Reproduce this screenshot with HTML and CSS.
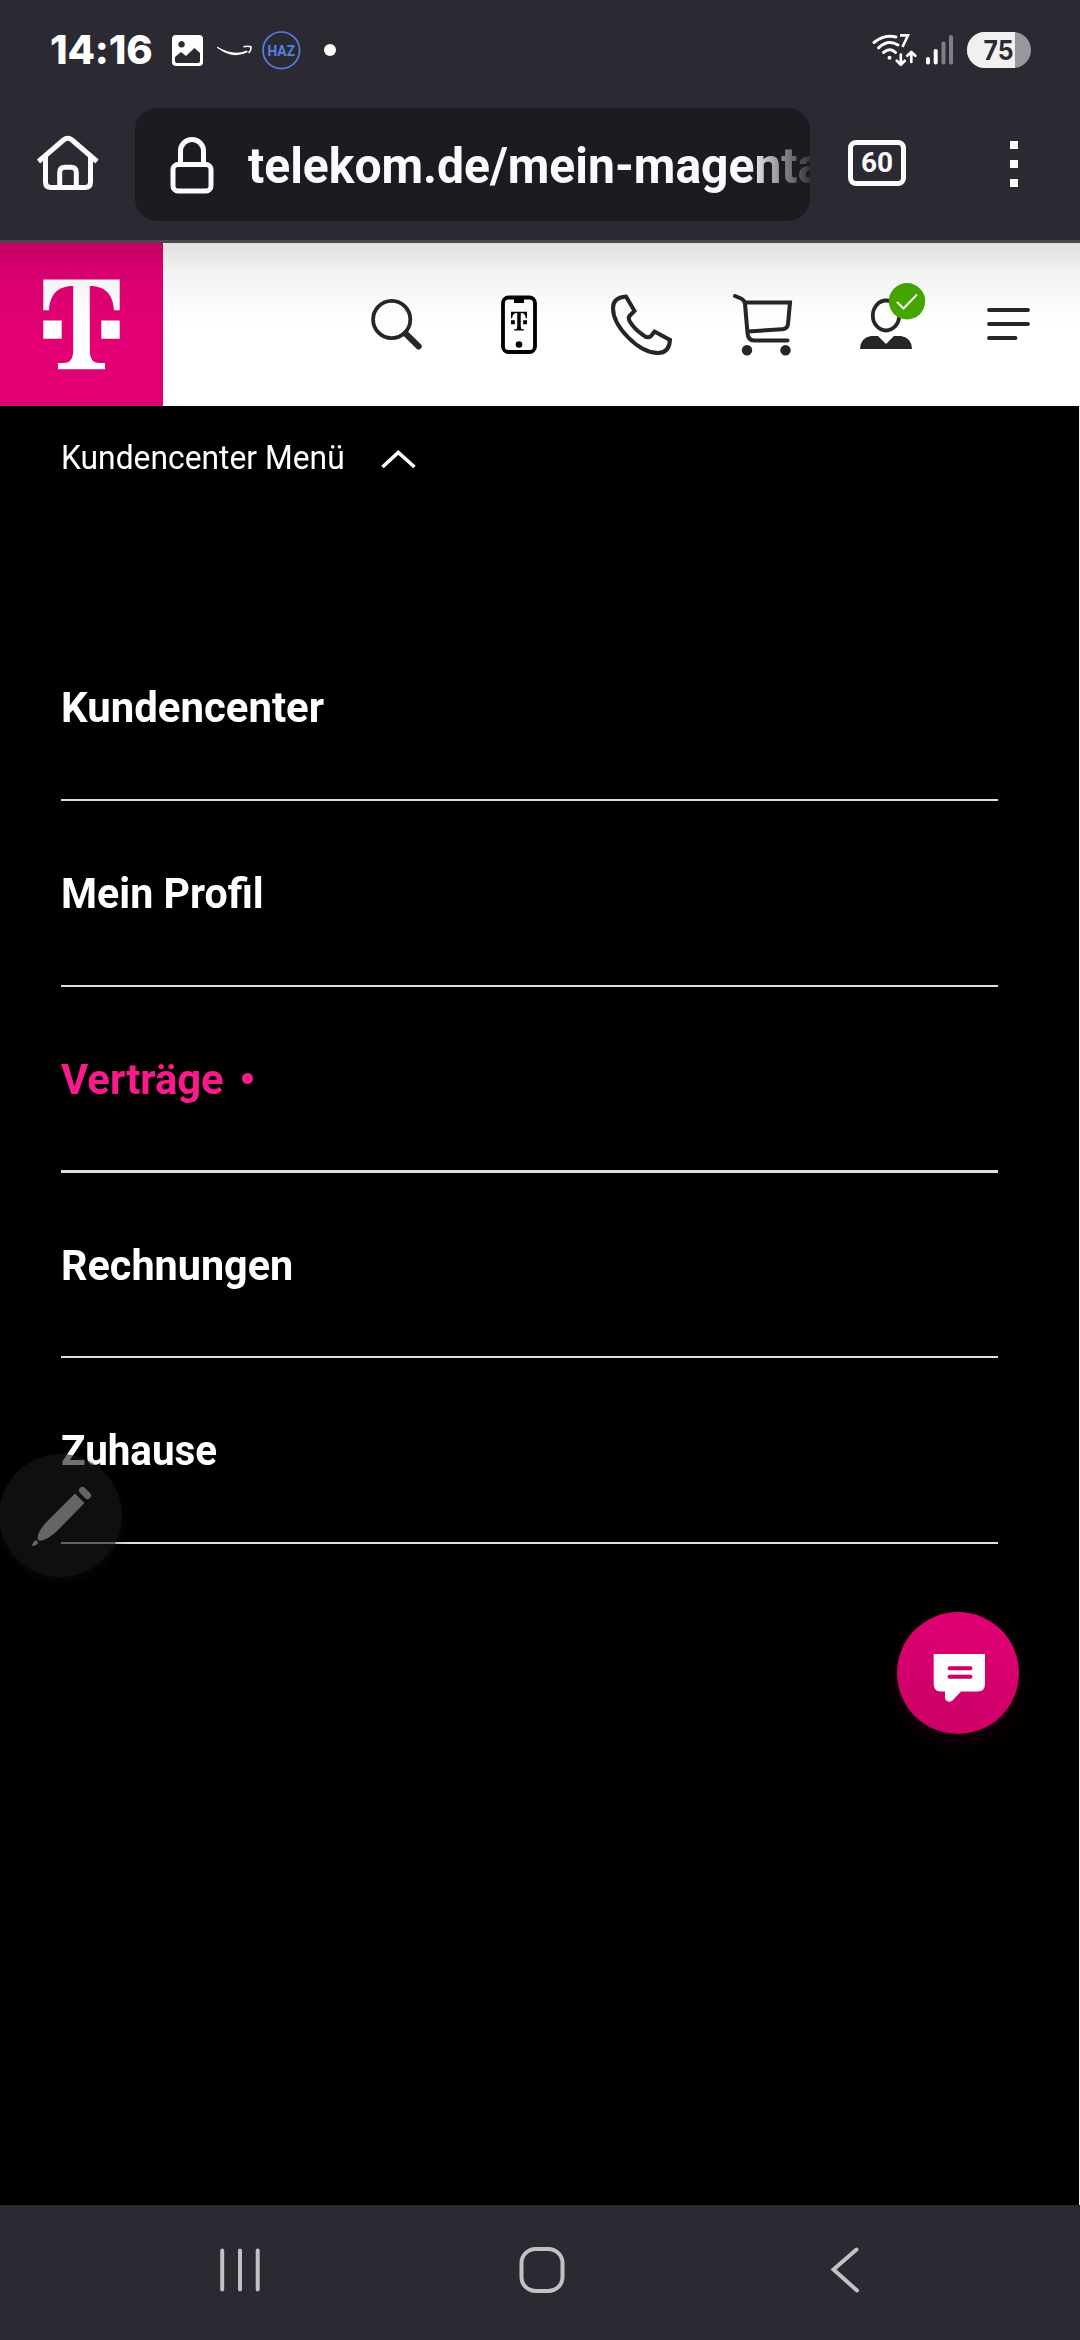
FILE: index.html
```html
<!DOCTYPE html>
<html lang="de">
<head>
<meta charset="utf-8">
<title>Kundencenter</title>
<link rel="stylesheet" href="styles.css">
</head>
<body>
<div class="screen">
  <header class="chrome">
    <div class="status">
      <span class="clock">14:16</span>
      <svg class="status-left" width="166" height="42" viewBox="170 30 166 42">
        <path fill="#fff" fill-rule="evenodd" d="M176 35H199Q203 35 203 39V62Q203 66 199 66H176Q172 66 172 62V39Q172 35 176 35ZM181.500 41A3.300 3.300 0 1 0 181.600 41ZM175 57V61Q175 63 177 63H198Q200 63 200 61V53L194.500 48L186 56L181 52Z"/>
        <path fill="#fff" d="M217 46.500Q234 56.500 246.500 50.500L248 52Q233 60 217 47.800Z"/>
        <path fill="none" stroke="#fff" stroke-width="1.500" d="M243.500 46.800Q248 45.500 251 46.800Q251.500 50 248.500 53"/>
        <circle cx="281.300" cy="50.300" r="18.300" fill="none" stroke="#5680e0" stroke-width="1.700"/>
        <text class="badge-text" x="267.500" y="55.600" textLength="27.500" lengthAdjust="spacingAndGlyphs">HAZ</text>
        <circle cx="330" cy="50" r="6" fill="#fff"/>
      </svg>
      <svg class="status-right" width="162" height="42" viewBox="870 30 162 42">
        <g fill="none" stroke="#fff" stroke-width="3" stroke-linecap="round">
          <path d="M874 42.500Q884 34 896 37"/><path d="M878.500 47.800Q888 39 898 45"/><path d="M883.500 52.500Q890 47 895.500 52.500"/>
          <path stroke-linejoin="round" stroke-width="2.700" d="M900.800 54.500V64.500M896.800 60.800L900.800 64.700L904.800 60.800M911.300 62V52M907.300 55.800L911.300 51.900L915.300 55.800"/>
        </g>
        <circle cx="889.500" cy="57.800" r="2" fill="#fff"/>
        <path fill="none" stroke="#fff" stroke-width="2.600" d="M900 35.400H908L902.500 47"/>
        <g fill="#fff"><rect x="926" y="57" width="4" height="7.500" rx="1.800"/><rect x="933.700" y="49" width="4" height="15.500" rx="1.800"/></g>
        <g fill="#807e86"><rect x="941.500" y="41.500" width="4" height="23" rx="1.800"/><rect x="949" y="35" width="4" height="29.500" rx="1.800"/></g>
        <rect x="967" y="32" width="64" height="36" rx="18" fill="#98979d"/>
        <path fill="#f0f0f1" d="M985 32H1015V68H985A18 18 0 0 1 985 32Z"/>
        <text class="battery-text" x="983.500" y="60" textLength="30" lengthAdjust="spacingAndGlyphs">75</text>
      </svg>
    </div>
    <div class="toolbar">
      <svg class="home" width="64" height="60" viewBox="36 132 64 60" fill="none" stroke="#fbfbfe" stroke-width="5" stroke-linejoin="round">
        <path d="M38.500 161.500L63.500 140Q67.700 136.500 72 140L97 161.500M45.500 156V182Q45.500 187.500 51 187.500H85Q90.500 187.500 90.500 182V156M59.700 187V172.500Q59.700 167.300 65 167.300H71Q76.300 167.300 76.300 172.500V187"/>
      </svg>
      <div class="url">
        <svg class="lock" width="44" height="60" viewBox="170 135 44 60" fill="none" stroke="#fbfbfe" stroke-width="5">
          <rect x="173" y="164.500" width="38" height="26.500" rx="5"/><path d="M180.500 164V151A11.500 11.500 0 0 1 203.500 151V164"/>
        </svg>
        <span class="address">telekom.de/mein-magenta</span>
      </div>
      <div class="tabs">60</div>
      <div class="dots"><i></i><i></i><i></i></div>
    </div>
  </header>
  <main class="page">
    <div class="site-header">
      <div class="logo">
        <svg width="78" height="92" viewBox="42 278 78 92" fill="#fff">
          <path id="t-mark" d="M43.300 279.500H119.700V310.300H114C113 295 106 286 89.800 286V350Q89.800 363 99 363H105V369.300H58V363H64Q73.200 363 73.200 350V286C57 286 50 295 49 310.300H43.300ZM43.300 320.500H61.700V338.700H43.300ZM101.300 320.500H119.700V338.700H101.300Z"/>
        </svg>
      </div>
      <svg class="tools" width="680" height="80" viewBox="360 280 680 80" fill="none" stroke="#262626" stroke-width="3.800">
        <circle cx="391.700" cy="319.500" r="18.600"/><path stroke-width="6" stroke-linecap="round" d="M405.500 333.500L418.700 346.500"/>
        <g stroke="#000"><rect x="503" y="297.500" width="32" height="54.500" rx="5.500"/><rect x="514" y="297" width="10" height="6" fill="#000" stroke="none"/><circle cx="519" cy="344.500" r="3.300" fill="#000" stroke="none"/></g>
        <use href="#t-mark" fill="#000" stroke="none" transform="translate(501.880 253.040) scale(.21)"/>
        <path stroke-width="4" d="M626 296.500Q613 297.500 613 308C613 327 639 353 658 353Q669 353 670 340L654.500 331.500L651 336Q647.500 339 643 335C637 331 633 327 629.500 321Q627.500 317 631 314.500L634.500 311Z"/>
        <g stroke-width="4"><path stroke-linecap="round" d="M735 296L741 298.500Q744.500 300 745 304L747.500 333Q748 340.500 754 340.500H787.500"/><path d="M744 302.500H790L788 324Q787.500 329 782 329.300L747 331.500"/><circle cx="747" cy="350.300" r="5.200" fill="#262626" stroke="none"/><circle cx="785.500" cy="350.300" r="5.200" fill="#262626" stroke="none"/></g>
        <ellipse cx="886" cy="315.500" rx="13.200" ry="15"/>
        <path fill="#262626" stroke="none" d="M860 349Q860 338 871 336H878L886 344L894 336H901Q912 338 912 349Z"/>
        <path stroke-linecap="round" d="M989 310H1028M989 324H1028M989 338H1015.500"/>
      </svg>
      <svg class="check" width="38" height="38" viewBox="888 282 38 38"><circle cx="907" cy="301.300" r="18.200" fill="#46a800"/><path d="M897 302L903.500 308.500L917 294.500" fill="none" stroke="#fff" stroke-width="2"/></svg>
    </div>
    <div class="menu">
      <div class="menu-title"><span class="menu-label">Kundencenter Menü</span>
        <svg width="38" height="24" viewBox="380 446 38 24"><path d="M382.500 467L398.300 452.500L414.500 467" fill="none" stroke="#fff" stroke-width="3.600"/></svg>
      </div>
      <nav class="links">
        <a class="link"><span class="w1">Kundencenter</span></a>
        <a class="link"><span class="w2">Mein Profil</span></a>
        <a class="link active"><span class="w3">Verträge</span><b></b></a>
        <a class="link"><span class="w4">Rechnungen</span></a>
        <a class="link"><span class="w5">Zuhause</span></a>
      </nav>
    </div>
  </main>
  <footer class="navbar">
    <svg width="1080" height="60" viewBox="0 2240 1080 60" fill="none" stroke="#c2c1c4" stroke-width="4" stroke-linecap="round">
      <path d="M222.200 2250.500V2289.500M240 2250.500V2289.500M257.700 2250.500V2289.500"/><rect x="521.500" y="2249" width="41" height="42" rx="14"/><path d="M856.500 2249.500L833.500 2269.500L857 2290.500"/>
    </svg>
  </footer>
  <div class="pen"><svg width="64" height="64" viewBox="30 1484 64 64" fill="#656567"><path d="M75 1493.500L84.500 1503L58 1530Q48 1540 39.500 1541L37.500 1538.500Q38 1530 49 1519.500Z"/><path d="M36 1540L38.500 1542.500Q36 1546 32 1546Q32.500 1542 36 1540Z"/><path d="M82.500 1490.500L87.500 1495.500" stroke="#656567" stroke-width="7" stroke-linecap="round"/></svg></div>
  <div class="chat"><svg width="52" height="50" viewBox="933 1653 52 50"><path fill="#fff" d="M933.700 1654H985V1684Q985 1691.500 977.500 1691.500H961L952.500 1700.500Q950 1702.500 947 1701Q945 1700 945 1697V1691.500H941Q933.700 1691.500 933.700 1684Z"/><path d="M949.500 1668.200H970.500M949.500 1676.700H970.500" stroke="#d0006a" stroke-width="4" stroke-linecap="round"/></svg></div>
</div>
</body>
</html>
```
FILE: styles.css
```css
* { box-sizing: border-box; }
body { margin: 0; background: #000; font-family: Roboto, "Liberation Sans", sans-serif; }
svg { display: block; flex: none; }
.screen { position: relative; width: 1080px; height: 2340px; display: flex; flex-direction: column; overflow: hidden; }
.chrome { height: 243px; flex: none; background: #2b2a33; border-bottom: 3px solid #4a4951; }
.status { height: 100px; padding: 0 48px 0 50px; display: flex; align-items: center; }
.clock { font: 800 40px/100px Inter, sans-serif; letter-spacing: -.2px; color: #fff; width: 120px; white-space: nowrap; }
.status-left { margin-top: 2px; }
.status-right { margin: 2px 0 0 auto; }
.badge-text { font: 700 15px Roboto, sans-serif; fill: #5680e0; }
.battery-text { font: 700 27px Inter, sans-serif; fill: #2b2a33; }
.toolbar { height: 129px; display: flex; align-items: center; padding: 8px 0 0 36px; }
.home { margin-top: -13px; }
.url { width: 675px; height: 113px; margin: -8px 0 0 35px; padding-left: 35px; display: flex; align-items: center; background: #1c1b22; border-radius: 22px; overflow: hidden; }
.address { margin: 2px 0 0 34px; font-size: 50px; font-weight: 700; white-space: nowrap; color: #fbfbfe; transform: scaleX(.96); transform-origin: left; -webkit-mask-image: linear-gradient(90deg, #000 520px, transparent 594px); mask-image: linear-gradient(90deg, #000 520px, transparent 594px); }
.tabs { width: 58px; height: 46px; margin: -11px 0 0 38px; border: 5px solid #fbfbfe; border-radius: 8px; font-size: 28px; font-weight: 700; line-height: 36px; text-align: center; color: #fbfbfe; }
.dots { margin: -9px 0 0 104px; display: grid; gap: 11px; }
.dots i { width: 8px; height: 8px; background: #fbfbfe; }
.page { flex: 1; display: flex; flex-direction: column; }
.site-header { position: relative; height: 163px; display: flex; background: #fff; }
.site-header::after { content: ""; position: absolute; inset: 0 0 auto; height: 84px; background: linear-gradient(rgba(0,0,0,.12), rgba(0,0,0,.05) 35%, rgba(0,0,0,.018) 70%, transparent); }
.logo { width: 163px; background: #e20074; padding: 35px 0 0 42px; }
.tools { margin: 37px 0 0 197px; }
.check { position: absolute; left: 888px; top: 39px; }
.menu { flex: 1; background: #000; border-right: 1px solid #eee; padding: 24px 81px 0 61px; }
.menu-title { display: flex; height: 56px; align-items: center; color: #fff; }
.menu-label { width: 319px; margin-top: -2px; font-size: 34px; line-height: 56px; white-space: nowrap; transform: scaleX(.935); transform-origin: left; }
.links { margin-top: 129px; }
.link { display: flex; align-items: flex-start; height: 186px; padding-top: 67px; border-bottom: 2px solid #dedede; color: #fff; font-size: 43px; font-weight: 700; line-height: 50px; }
.link:nth-child(4) { height: 185px; }
.link span { transform-origin: left; white-space: nowrap; }
.w1 { transform: scaleX(.975); }
.w2 { transform: scaleX(.957); }
.w3 { width: 181px; transform: scaleX(.97); }
.w4 { transform: scaleX(.962); }
.w5 { transform: scaleX(.939); }
.active { color: #f91a8c; border-bottom-width: 3px; }
.active b { width: 11px; height: 11px; margin-top: 19px; border-radius: 50%; background: #f91a8c; }
.navbar { height: 135px; flex: none; padding-top: 35px; background: #2b2a33; }
.pen { position: absolute; left: -1px; top: 1454px; width: 123px; height: 123px; padding: 30px 0 0 31px; border-radius: 50%; background: rgba(24,24,24,.62); box-shadow: 0 4px 8px rgba(25,25,25,.3); }
.chat { position: absolute; left: 897px; top: 1612px; width: 122px; height: 122px; padding: 41px 0 0 36px; border-radius: 50%; background: linear-gradient(200deg, #e20074, #c90065); box-shadow: 0 8px 20px rgba(226,0,116,.1); }
```
